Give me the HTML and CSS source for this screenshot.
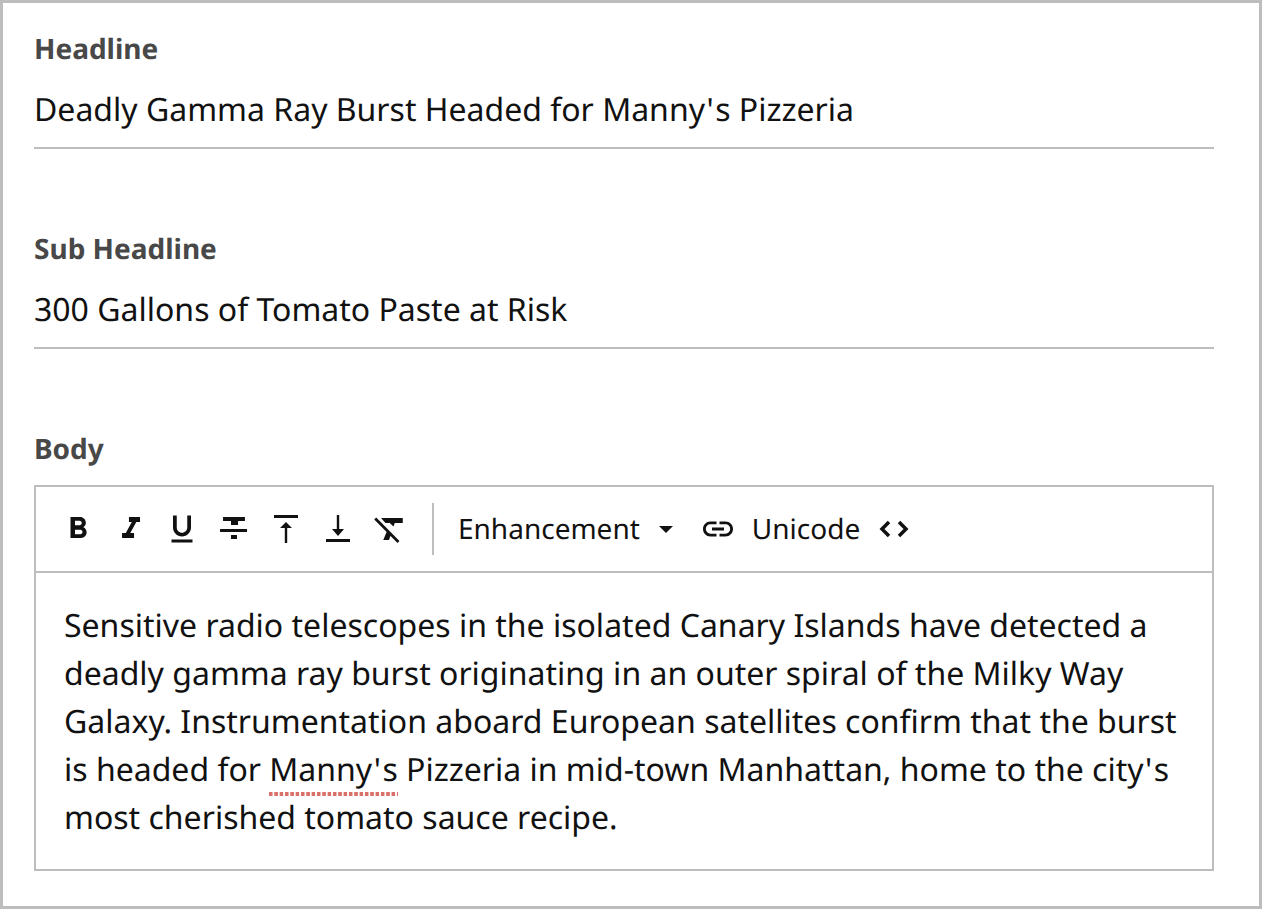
FILE: index.html
```html
<!DOCTYPE html>
<html>
<head>
  <title>Story Editor</title>
  <link rel="stylesheet" href="styles.css">
</head>
<body>
  <div class="story-form">

    <div class="field">
      <div class="field-label">Headline</div>
      <div class="field-value">Deadly Gamma Ray Burst Headed for Manny<span class="apos">'</span>s Pizzeria</div>
    </div>

    <div class="field">
      <div class="field-label">Sub Headline</div>
      <div class="field-value">300 Gallons of Tomato Paste at Risk</div>
    </div>

    <div class="field-label">Body</div>
    <div class="editor">
      <div class="toolbar">
        <div class="icon-group">
          <svg class="icon" viewBox="0 0 24 24"><path d="M15.6 10.79c.97-.67 1.65-1.77 1.65-2.79 0-2.26-1.75-4-4-4H7v14h7.04c2.09 0 3.71-1.7 3.71-3.79 0-1.52-.86-2.82-2.15-3.42zM10 6.5h3c.83 0 1.5.67 1.5 1.5s-.67 1.5-1.5 1.5h-3v-3zm3.5 9H10v-3h3.5c.83 0 1.5.67 1.5 1.5s-.67 1.5-1.5 1.5z"/></svg>
          <svg class="icon" viewBox="0 0 24 24"><path d="M11.300 4H18.700V7.300H16.200L12.200 14.700H14.700V18H6.700V14.700H9.200L13.200 7.300H11.300z"/></svg>
          <svg class="icon" viewBox="0 0 24 24"><path d="M12 17c3.31 0 6-2.69 6-6V3h-2.500v8c0 1.930-1.570 3.500-3.500 3.500S8.500 12.930 8.500 11V3H6v8c0 3.310 2.690 6 6 6zm-7 2v2h14v-2H5z"/></svg>
          <svg class="icon" viewBox="0 0 24 24"><path d="M4.700 4H19.300V6.700H14.700V9.300H10V6.700H4.700zM2.700 12H20.700V14H2.700zM10 16H14V18.700H10z"/></svg>
          <svg class="icon" viewBox="0 0 24 24"><path d="M4 2.700H20V4.700H4zM12 7.300L16 11.300H12.800V21.300H11.200V11.300H8z"/></svg>
          <svg class="icon" viewBox="0 0 24 24"><path d="M11.200 2.700H12.800V12H16L12 16.700L8 12H11.200zM4 18.700H20V20.700H4z"/></svg>
          <svg class="icon" viewBox="0 0 24 24"><path d="M6 4.700H20.500V8H15.200L14.300 10.400L11.500 7.600L11.600 8H9zM2.800 4.300L18.300 20L17 21.300L1.500 5.600zM9.800 13.800L12.400 16.400L11.300 19.300H7.500z"/></svg>
        </div>
        <div class="toolbar-divider"></div>
        <div class="tool-item">Enhancement</div>
        <svg class="caret" viewBox="0 0 16 8"><path d="M0 0h16L8 8z"/></svg>
        <svg class="link-icon" viewBox="0 0 24 24"><path d="M3.900 12c0-1.710 1.390-3.100 3.100-3.100h4V7H7c-2.760 0-5 2.240-5 5s2.240 5 5 5h4v-1.900H7c-1.710 0-3.100-1.390-3.100-3.100zM8 13h8v-2H8v2zm9-6h-4v1.900h4c1.710 0 3.100 1.390 3.100 3.100s-1.390 3.100-3.100 3.100h-4V17h4c2.760 0 5-2.240 5-5s-2.240-5-5-5z"/></svg>
        <div class="tool-item unicode">Unicode</div>
        <svg class="code-icon" viewBox="0 0 30 20"><path d="M10 3L3 10l7 7M20 3l7 7-7 7"/></svg>
      </div>
      <div class="editor-body">Sensitive radio telescopes in the isolated Canary Islands have detected a deadly gamma ray burst originating in an outer spiral of the Milky Way Galaxy. Instrumentation aboard European satellites confirm that the burst is headed for <span class="misspelled">Manny<span class="apos">'</span>s</span> Pizzeria in mid-town Manhattan, home to the city<span class="apos">'</span>s most cherished tomato sauce recipe.</div>
    </div>

  </div>
</body>
</html>
```

FILE: styles.css
```css
html, body {
  margin: 0;
  padding: 0;
}

body {
  background-color: #fff;
  color: #111;
  font-family: "Noto Sans", sans-serif;
  text-rendering: geometricPrecision;
}

.story-form {
  box-sizing: border-box;
  height: 909px;
  border: 3px solid #bdbdbd;
  padding: 26px 45px 0 31px;
}

.field {
  height: 200px;
}

.field-label {
  height: 40px;
  line-height: 40px;
  font-size: 28px;
  font-weight: 700;
  color: #484848;
}

.field-value {
  box-sizing: border-box;
  height: 80px;
  padding-top: 1px;
  line-height: 80px;
  font-size: 32px;
  border-bottom: 2px solid #bdbdbd;
}

.apos {
  padding: 0 1.500px;
}

.editor {
  margin-top: 16px;
  border: 2px solid #bdbdbd;
}

.toolbar {
  display: flex;
  align-items: center;
  height: 86px;
  box-sizing: border-box;
  border-bottom: 2px solid #bdbdbd;
  padding-left: 24px;
}

.icon-group {
  display: flex;
  gap: 16px;
}

.icon {
  width: 36px;
  height: 36px;
  fill: #111;
}

.toolbar-divider {
  width: 2px;
  height: 52px;
  margin: 0 24px;
  background-color: #bdbdbd;
}

.tool-item {
  font-size: 28px;
}

.caret {
  width: 16px;
  height: 7px;
  margin-left: 18px;
  fill: #111;
}

.link-icon {
  width: 36px;
  height: 36px;
  margin-left: 26px;
  fill: #111;
}

.unicode {
  margin-left: 16px;
}

.code-icon {
  width: 30px;
  height: 20px;
  margin-left: 19px;
  fill: none;
  stroke: #111;
  stroke-width: 3.500;
}

.editor-body {
  height: 239px;
  padding: 29px 20px 28px 28px;
  font-size: 32px;
  line-height: 48px;
}

.misspelled {
  padding-bottom: 5px;
  background-image: linear-gradient(to right, #d9706a 62%, transparent 62%);
  background-size: 5.330px 4px;
  background-position: 0 100%;
  background-repeat: repeat-x;
}
```
